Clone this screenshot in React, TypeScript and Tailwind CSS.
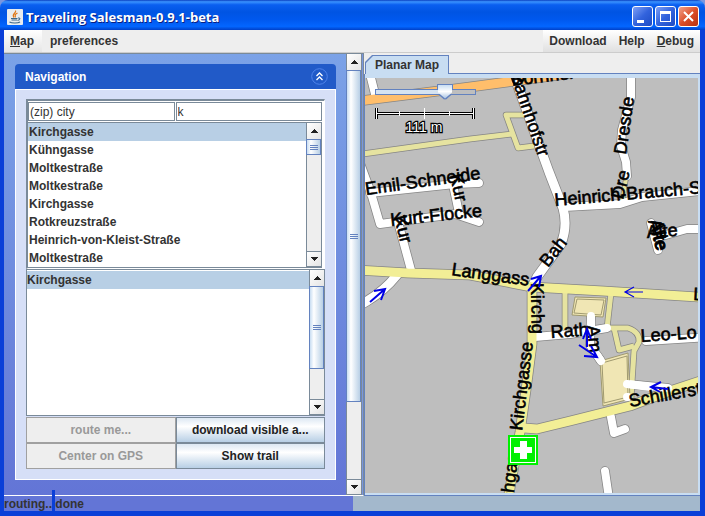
import React from "react";

const streets = [
  "Kirchgasse",
  "Kühngasse",
  "Moltkestraße",
  "Moltkestraße",
  "Kirchgasse",
  "Rotkreuzstraße",
  "Heinrich-von-Kleist-Straße",
  "Moltkestraße",
];

function Arrow({ down = false }: { down?: boolean }) {
  return (
    <svg viewBox="0 0 8 4" className="h-1 w-2" shapeRendering="crispEdges">
      <path d={down ? "M0 0H8L4 4Z" : "M0 4H8L4 0Z"} fill="#222" />
    </svg>
  );
}

function Scrollbar({
  name,
  thumb,
  rest,
  className,
}: {
  name: string;
  thumb: string;
  rest: string;
  className: string;
}) {
  const button =
    "flex h-4 shrink-0 items-center justify-center border-l border-[#7a8a99] bg-gradient-to-br from-white to-[#e4e4e4]";
  return (
    <div className={"flex shrink-0 flex-col bg-[#eee] " + className}>
      <button type="button" aria-label={"Scroll " + name + " up"} className={button}>
        <Arrow />
      </button>
      <div
        className={
          "flex flex-col items-center justify-center gap-px border border-[#6382bf] bg-gradient-to-r from-[#c8ddf2] via-white via-30% to-[#b8cfe5] " +
          thumb
        }
      >
        <span className="h-px w-2 bg-[#6382bf]" />
        <span className="h-px w-2 bg-[#6382bf]" />
        <span className="h-px w-2 bg-[#6382bf]" />
      </div>
      <div className={"border-l border-[#7a8a99] " + rest} />
      <button
        type="button"
        aria-label={"Scroll " + name + " down"}
        className={button + " border-t border-b"}
      >
        <Arrow down />
      </button>
    </div>
  );
}

function TitleBar() {
  const box =
    "flex h-[21px] w-[21px] items-center justify-center rounded-[3px] border border-white";
  return (
    <header className="flex h-[30px] shrink-0 items-center rounded-t-lg bg-[linear-gradient(#0a3fc0_0%,#3a93ff_6%,#0a5ff0_16%,#0054e3_40%,#0058ee_65%,#0366ff_88%,#0040c8_100%)] pr-[6px] pl-[7px]">
      <svg viewBox="0 0 16 16" className="mt-1 h-4 w-4 shrink-0">
        <rect width="16" height="16" rx="1" fill="#e8ecef" />
        <path d="M8.500 1.500C10 4 4 5 7 8.500M10.500 4C6 6 9.500 6.500 8 8.500" fill="none" stroke="#e07818" strokeWidth="1.200" />
        <path d="M4 9.500H10.500M4.500 11H10M11 9C14 8.500 13 11 10.500 11.500M2.500 13C5 14.500 11 14.300 13 13" fill="none" stroke="#3e6787" strokeWidth="1.100" />
      </svg>
      <h1 className="mt-1 ml-[3px] flex-1 font-['Open_Sans','Noto_Sans',sans-serif] text-[13px] leading-4 font-bold text-white [text-shadow:1px_1px_0_#0a1f80]">
        Traveling Salesman-0.9.1-beta
      </h1>
      <div className="mt-[3px] flex gap-[2px]">
        <button type="button" aria-label="Minimize" className={box + " bg-gradient-to-br from-[#7f9ff5] via-[#3263dd] to-[#1d4bc4]"}>
          <svg viewBox="0 0 19 19" className="h-[19px] w-[19px]"><path d="M4 13H11V16H4Z" fill="#fff" /></svg>
        </button>
        <button type="button" aria-label="Maximize" className={box + " bg-gradient-to-br from-[#7f9ff5] via-[#3263dd] to-[#1d4bc4]"}>
          <svg viewBox="0 0 19 19" className="h-[19px] w-[19px]"><path d="M4 4H15V15H4ZM5 7V14H14V7Z" fill="#fff" fillRule="evenodd" /></svg>
        </button>
        <button type="button" aria-label="Close" className={box + " bg-gradient-to-br from-[#f0a088] via-[#dc4e28] to-[#b83010]"}>
          <svg viewBox="0 0 19 19" className="h-[19px] w-[19px]"><path d="M5 5L14 14M14 5L5 14" stroke="#fff" strokeWidth="2" /></svg>
        </button>
      </div>
    </header>
  );
}

function MenuBar() {
  return (
    <nav className="flex h-[23px] shrink-0 items-stretch border-b border-[#ccc] bg-[#eee] text-[#333]">
      <button type="button" className="bg-gradient-to-b from-white to-[#e6e6e6] pr-2 pl-[6px]">
        <u>M</u>ap
      </button>
      <button type="button" className="px-2">preferences</button>
      <div className="ml-auto flex bg-gradient-to-b from-white to-[#e0e0e0]">
        <button type="button" className="px-[6px]">Download</button>
        <button type="button" className="px-[6px]">Help</button>
        <button type="button" className="px-[6px]"><u>D</u>ebug</button>
      </div>
    </nav>
  );
}

function NavigationPanel() {
  const field =
    "h-[19px] w-full min-w-0 border border-[#7a8a99] bg-white px-px font-['Liberation_Sans',Arial,sans-serif] text-[12px] leading-4 font-normal text-[#333] outline-none";
  const off = "h-[26px] border border-[#a0a0a0] bg-[#eee] text-[#999]";
  const on =
    "h-[26px] border border-[#7a8a99] bg-gradient-to-b from-[#dde8f3] via-white via-35% to-[#b8cfe5] text-[#222]";
  return (
    <section className="flex flex-col">
      <div className="flex h-[25px] shrink-0 items-center justify-between rounded-t-[4px] bg-[#215ac8] pr-2 pl-[10px] text-white">
        <h2>Navigation</h2>
        <button type="button" aria-label="Collapse Navigation">
          <svg viewBox="0 0 17 17" className="h-[17px] w-[17px]" fill="none">
            <circle cx="8.500" cy="8.500" r="7.800" stroke="#4f83ea" />
            <path d="M5.500 8L8.500 5L11.500 8M5.500 12L8.500 9L11.500 12" stroke="#fff" strokeWidth="1.300" />
          </svg>
        </button>
      </div>
      <div className="border border-white bg-[#d6dff7] px-[10px] py-[9px] pb-[10px]">
        <div className="border-t-2 border-l-2 border-r border-b border-t-[#7a8a99] border-r-white border-b-white border-l-[#7a8a99] bg-white pr-[2px]">
          <div className="grid grid-cols-2 gap-px pt-px">
            <input aria-label="City" defaultValue="(zip) city" className={field} />
            <input aria-label="Street" defaultValue="k" className={field} />
          </div>
          <div className="mt-px flex h-[146px] border-y border-[#7a8a99]">
            <ul role="listbox" aria-label="Streets" className="min-w-0 flex-1 overflow-hidden text-[#333]">
              {streets.map((street, i) => (
                <li
                  key={i}
                  role="option"
                  aria-selected={i === 0}
                  className={"h-[18px] truncate pl-px leading-[18px] " + (i === 0 ? "bg-[#b8cfe5]" : "")}
                >
                  {street}
                </li>
              ))}
            </ul>
            <Scrollbar name="streets" thumb="h-4" rest="flex-1" className="w-4 border-r border-[#7a8a99]" />
          </div>
        </div>
        <div className="flex h-[147px] border-y border-l border-[#7a8a99] bg-white">
          <ul role="listbox" aria-label="Selected streets" className="min-w-0 flex-1 pt-px text-[#333]">
            <li role="option" aria-selected="true" className="h-[18px] bg-[#b8cfe5] leading-[18px]">
              Kirchgasse
            </li>
          </ul>
          <Scrollbar name="selection" thumb="flex-[82]" rest="flex-[31]" className="w-4 border-r border-[#7a8a99]" />
        </div>
        <div className="mt-px grid grid-cols-2">
          <button type="button" disabled className={off}>route me...</button>
          <button type="button" className={on}>download visible a...</button>
          <button type="button" disabled className={off}>Center on GPS</button>
          <button type="button" className={on}>Show trail</button>
        </div>
      </div>
    </section>
  );
}

type Road = { d: string; w: number; c: string };

const WHITE = "#ffffff";
const YELLOW = "#f2ee96";
const PALE = "#e6e3a0";

const roads: Road[] = [
  { d: "M369 70L376 98", w: 8, c: WHITE },
  { d: "M355 101.500L470 87L570 73.500", w: 9, c: "#ffbe6b" },
  { d: "M355 155L470 139L512 134", w: 5, c: PALE },
  { d: "M524 115H506L518 148L534 146", w: 5, c: PALE },
  { d: "M357 155L371 193L380 224L395 222L455 214L479 222", w: 8, c: WHITE },
  { d: "M370 193L455 184L479 183", w: 8, c: WHITE },
  { d: "M452 180L459 213", w: 8, c: WHITE },
  { d: "M398 222L411 270", w: 8, c: WHITE },
  { d: "M355 308L367 301Q384 291 397 275", w: 9, c: WHITE },
  { d: "M627 172L622 203", w: 4, c: PALE },
  { d: "M631 70V97L622 130L621 146L626 162L627 176", w: 8, c: WHITE },
  { d: "M564 207L620 204L642 197L710 190", w: 8, c: WHITE },
  { d: "M651 223L658 250", w: 8, c: WHITE },
  { d: "M655 238L687 229H710", w: 8, c: WHITE },
  { d: "M565 290V330", w: 5, c: PALE },
  { d: "M611 293L607 328", w: 5, c: PALE },
  { d: "M614 328L619 350L634 346", w: 5, c: PALE },
  { d: "M608 328H628Q640 332 639 342L634 351L631 398", w: 5, c: PALE },
  { d: "M535 337L570 334L607 328", w: 8, c: WHITE },
  { d: "M591 316L590 345L601 361", w: 8, c: WHITE },
  { d: "M646 341L710 337", w: 8, c: WHITE },
  { d: "M611 417L614 433L625 429", w: 8, c: WHITE },
  { d: "M605 471L610 505", w: 8, c: WHITE },
  { d: "M532 287V344L526 390L520 432L507 505", w: 9, c: YELLOW },
  { d: "M524 428L537 429L570 421L630 406L670 391L712 377", w: 9, c: YELLOW },
  { d: "M627 384L668 388", w: 8, c: WHITE },
  { d: "M512 70L549 172L563 208Q568 226 561 244L537 277L532 287", w: 9, c: WHITE },
  { d: "M355 270L408 273L470 275L532 287L603 291L712 298", w: 9, c: YELLOW },
];

const labels: { t: string; x: number; y: number; r: number }[] = [
  { t: "Bornhei", x: 512, y: 86, r: -7 },
  { t: "Bahnhofstr", x: 510, y: 75, r: 71 },
  { t: "Dresde", x: 626, y: 155, r: -82 },
  { t: "Dre", x: 623, y: 200, r: -76 },
  { t: "Heinrich-Brauch-S", x: 555, y: 206, r: -5 },
  { t: "Emil-Schneide", x: 366, y: 195, r: -8 },
  { t: "Kurt-Flocke", x: 391, y: 226, r: -6 },
  { t: "Kur", x: 450, y: 175, r: 78 },
  { t: "Kur", x: 394, y: 217, r: 76 },
  { t: "Kirchg", x: 531, y: 283, r: 89 },
  { t: "Bah", x: 548, y: 268, r: -52 },
  { t: "Rath", x: 551, y: 338, r: -4 },
  { t: "Am", x: 587, y: 326, r: 84 },
  { t: "Leo-Lo", x: 641, y: 342, r: -4 },
  { t: "Alte", x: 647, y: 238, r: -4 },
  { t: "Alte", x: 648, y: 221, r: 74 },
  { t: "Alte", x: 651, y: 221, r: 80 },
  { t: "Schillerst", x: 630, y: 407, r: -10 },
  { t: "Kirchgasse", x: 522, y: 431, r: -83 },
  { t: "Kirchgasse", x: 510, y: 524, r: -83 },
  { t: "Langgass", x: 451, y: 275, r: 8 },
  { t: "La", x: 693, y: 300, r: 3 },
];

const arrows: { d: string; w: number }[] = [
  { d: "M370 302L385 289M374 291L385 289L381 300", w: 2 },
  { d: "M528 291L541 276M531 279L541 276L539 287", w: 2 },
  { d: "M643 292H625M634 287L625 292L634 297", w: 1.2 },
  { d: "M587 347V329M583 339L587 329L591 339", w: 2 },
  { d: "M579 345L597 357M584 356L597 357L591 346", w: 2 },
  { d: "M668 389L651 387M661 382L651 387L660 392", w: 2 },
];

function CityMap() {
  return (
    <svg
      viewBox="365 78 333 415"
      preserveAspectRatio="xMinYMin slice"
      className="block h-full w-full bg-[#bebebe]"
      role="img"
      aria-label="Planar Map"
    >
      <g fill="none" strokeLinejoin="round">
        {roads.map((r, i) => (
          <path key={i} d={r.d} stroke="#858585" strokeWidth={r.w + 1.5} strokeLinecap={r.c === WHITE ? "round" : "butt"} />
        ))}
        {roads.map((r, i) => (
          <path key={i} d={r.d} stroke={r.c} strokeWidth={r.w} strokeLinecap={r.c === WHITE ? "round" : "butt"} />
        ))}
      </g>
      <g fill="#f0e6b4" stroke="#a09a70" strokeWidth="1">
        <path d="M575 297L606 298L603 317L572 315Z" />
        <path d="M577 299L604 300L601 315L574 313Z" />
        <path d="M600 361L628 353L630 399L603 406Z" />
        <path d="M602 363L627 356L628 397L604 403Z" />
      </g>
      <g fill="none" stroke="#fff" strokeWidth="8" strokeLinecap="round">
        <path d="M591 316V330M597 355L601 361M627 384L650 387M627 397H628" />
      </g>
      <g fill="#000" stroke="#000" strokeWidth="0.6" className="font-['Liberation_Sans',Arial,sans-serif] text-[18px] font-normal">
        {labels.map((l, i) => (
          <text key={i} transform={`translate(${l.x} ${l.y}) rotate(${l.r})`}>
            {l.t}
          </text>
        ))}
      </g>
      <g fill="none" stroke="#0000e6">
        {arrows.map((a) => (
          <path key={a.d} d={a.d} strokeWidth={a.w} />
        ))}
      </g>
      <g shapeRendering="crispEdges">
        <rect x="508" y="435" width="30" height="30" fill="#00f000" />
        <rect x="510.500" y="437.500" width="25" height="25" fill="none" stroke="#fff" />
        <path d="M520 441H527V447H532V453H527V459H520V453H514V447H520Z" fill="#fff" />
      </g>
      <g fill="none" shapeRendering="crispEdges">
        <path d="M376 113.500H474M376.500 108V119M473.500 108V119" stroke="#000" strokeWidth="3" />
        <path d="M376 113.500H474M376.500 108V119M473.500 108V119M424.500 108V119M399.500 111V116M449.500 111V116" stroke="#fff" />
      </g>
      <text
        x="424"
        y="132"
        textAnchor="middle"
        fill="#fff"
        stroke="#000"
        strokeWidth="2.500"
        paintOrder="stroke"
        className="font-['Liberation_Sans',Arial,sans-serif] text-[14px] font-normal"
      >
        111 m
      </text>
    </svg>
  );
}

function MapPane() {
  return (
    <section className="flex min-w-0 flex-1 flex-col bg-[#eee] pt-[2px]">
      <div role="tablist" className="flex h-[19px] shrink-0 pl-px">
        <button
          type="button"
          role="tab"
          aria-selected="true"
          className="h-5 bg-[#6382bf] p-px pb-0 [clip-path:polygon(7px_0,100%_0,100%_100%,0_100%,0_7px)]"
        >
          <span className="block h-[19px] bg-[#c8ddf2] px-[9px] leading-[18px] text-[#333] [clip-path:polygon(7px_0,100%_0,100%_100%,0_100%,0_7px)]">
            Planar Map
          </span>
        </button>
        <div className="flex-1 border-b border-[#6382bf]" />
      </div>
      <div className="relative min-h-0 flex-1 border-b border-l border-[#6382bf] bg-[#c8ddf2] pt-1 pr-[2px] pb-[2px]">
        <div className="h-full overflow-hidden">
          <CityMap />
        </div>
        <input
          type="range"
          aria-label="Zoom"
          min="0"
          max="100"
          defaultValue="73"
          className="absolute top-2 left-[11px] h-[18px] w-[99px] appearance-none bg-transparent [filter:drop-shadow(1px_0_0_#6382bf)_drop-shadow(-1px_0_0_#6382bf)_drop-shadow(0_1px_0_#6382bf)] [&::-webkit-slider-runnable-track]:h-[5px] [&::-webkit-slider-runnable-track]:border-t [&::-webkit-slider-runnable-track]:border-[#6382bf] [&::-webkit-slider-runnable-track]:bg-[linear-gradient(90deg,#d5e3f1_66%,#bebebe_66%)] [&::-webkit-slider-thumb]:-mt-[6px] [&::-webkit-slider-thumb]:h-[15px] [&::-webkit-slider-thumb]:w-[14px] [&::-webkit-slider-thumb]:appearance-none [&::-webkit-slider-thumb]:bg-[linear-gradient(#6382bf_1px,#c8ddf2_1px,#ffffff_50%,#a3bfe0)] [&::-webkit-slider-thumb]:[clip-path:polygon(0_0,100%_0,100%_60%,50%_100%,0_60%)]"
        />
      </div>
    </section>
  );
}

export default function App() {
  return (
    <div className="flex h-screen flex-col bg-[#7a96df] font-['Liberation_Sans',Arial,sans-serif] text-[12px] leading-4 font-bold">
      <TitleBar />
      <div className="flex min-h-0 flex-1 flex-col border-r-[5px] border-b-[5px] border-l-4 border-[#0a3fd8]">
        <MenuBar />
        <main className="flex min-h-0 flex-1">
          <div className="flex w-[360px] shrink-0 border-t border-r border-b border-t-[#7a8a99] border-r-[#7a8a99] border-b-white">
            <div className="min-w-0 flex-1 overflow-hidden bg-gradient-to-b from-[#7ba2e7] to-[#6375d6] pt-[10px] pr-[10px] pl-[11px]">
              <NavigationPanel />
            </div>
            <Scrollbar
              name="panel"
              thumb="flex-[332]"
              rest="flex-[77]"
              className="mr-px w-4 border-r border-[#7a8a99]"
            />
          </div>
          <MapPane />
        </main>
        <footer className="flex h-[15px] shrink-0 bg-[#a3b8cc]">
          <div className="relative w-[349px] bg-[#6375d6] leading-[17px] text-[#333]">
            routing...done
            <span className="absolute -top-[6px] left-12 h-[21px] w-[3px] bg-[#0a3fd8]" />
          </div>
        </footer>
      </div>
    </div>
  );
}
